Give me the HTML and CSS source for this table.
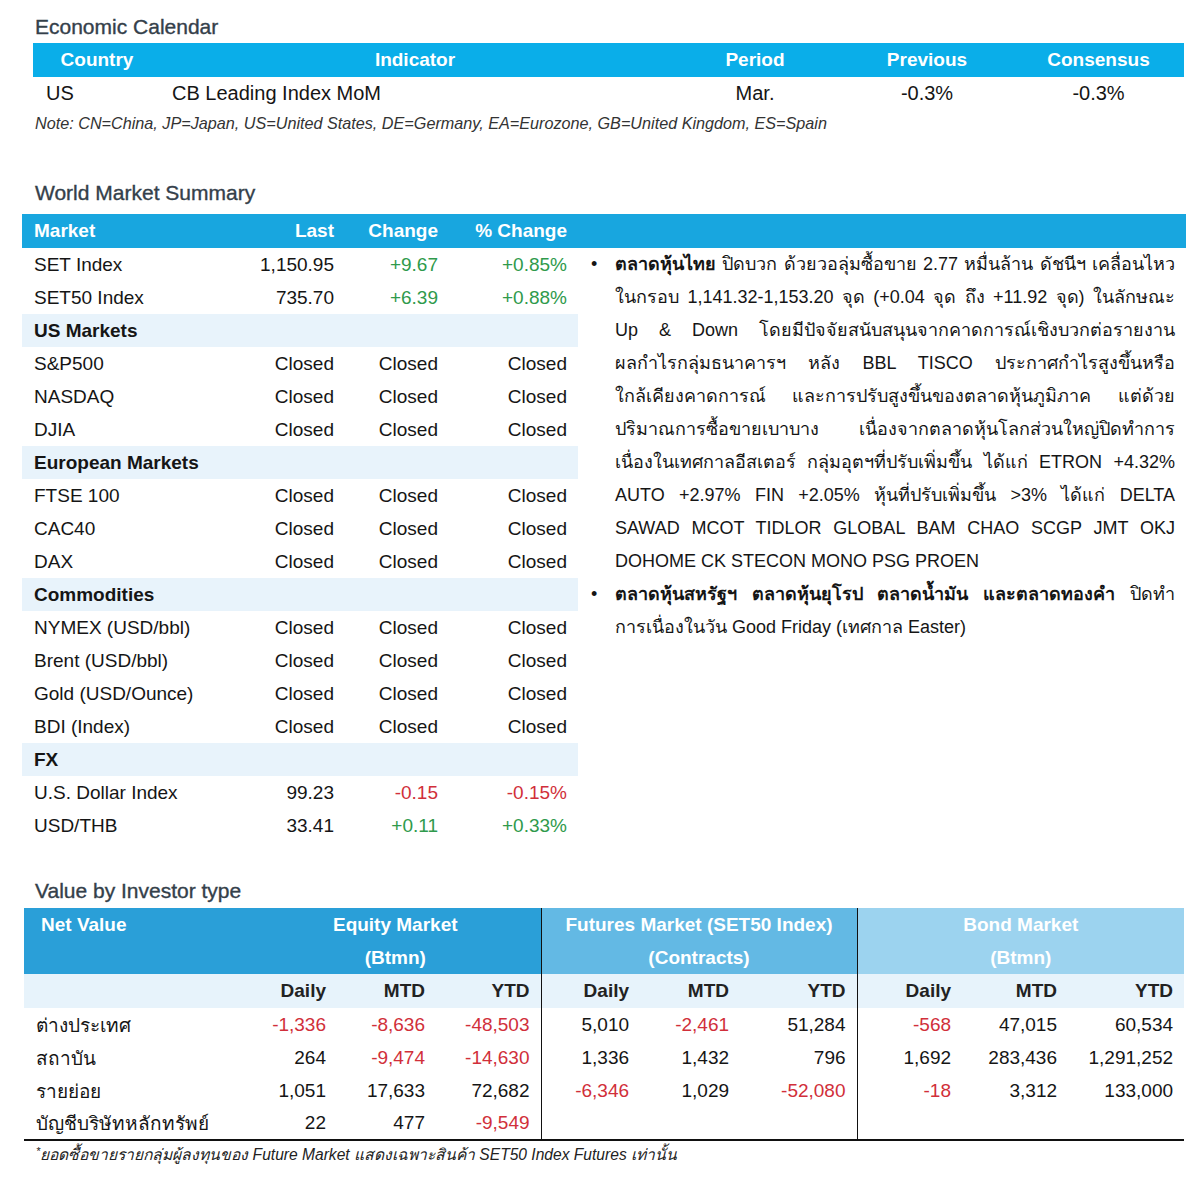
FILE: index.html
```html
<!DOCTYPE html>
<html lang="th">
<head>
<meta charset="utf-8">
<title>Market Summary</title>
<link rel="stylesheet" href="styles.css">
</head>
<body>
<div class="page">

  <section class="econ">
    <h2 class="sec-title">Economic Calendar</h2>
    <table class="econ-table">
      <colgroup>
        <col class="c-country"><col class="c-ind"><col class="c-period"><col class="c-prev"><col class="c-cons">
      </colgroup>
      <thead>
        <tr><th>Country</th><th>Indicator</th><th>Period</th><th>Previous</th><th>Consensus</th></tr>
      </thead>
      <tbody>
        <tr><td class="country">US</td><td class="ind">CB Leading Index MoM</td><td>Mar.</td><td>-0.3%</td><td>-0.3%</td></tr>
      </tbody>
    </table>
    <p class="note">Note: CN=China, JP=Japan, US=United States, DE=Germany, EA=Eurozone, GB=United Kingdom, ES=Spain</p>
  </section>

  <section class="wms">
    <h2 class="sec-title">World Market Summary</h2>
    <div class="wms-head">
      <div class="h-market">Market</div>
      <div class="h-num">Last</div>
      <div class="h-num">Change</div>
      <div class="h-pct">% Change</div>
    </div>
    <div class="wms-body">
      <table class="wms-table">
        <colgroup><col class="w1"><col class="w2"><col class="w3"><col class="w4"></colgroup>
        <tbody>
          <tr><td>SET Index</td><td>1,150.95</td><td class="up">+9.67</td><td class="up">+0.85%</td></tr>
          <tr><td>SET50 Index</td><td>735.70</td><td class="up">+6.39</td><td class="up">+0.88%</td></tr>
          <tr class="group"><td colspan="4">US Markets</td></tr>
          <tr><td>S&amp;P500</td><td>Closed</td><td>Closed</td><td>Closed</td></tr>
          <tr><td>NASDAQ</td><td>Closed</td><td>Closed</td><td>Closed</td></tr>
          <tr><td>DJIA</td><td>Closed</td><td>Closed</td><td>Closed</td></tr>
          <tr class="group"><td colspan="4">European Markets</td></tr>
          <tr><td>FTSE 100</td><td>Closed</td><td>Closed</td><td>Closed</td></tr>
          <tr><td>CAC40</td><td>Closed</td><td>Closed</td><td>Closed</td></tr>
          <tr><td>DAX</td><td>Closed</td><td>Closed</td><td>Closed</td></tr>
          <tr class="group"><td colspan="4">Commodities</td></tr>
          <tr><td>NYMEX (USD/bbl)</td><td>Closed</td><td>Closed</td><td>Closed</td></tr>
          <tr><td>Brent (USD/bbl)</td><td>Closed</td><td>Closed</td><td>Closed</td></tr>
          <tr><td>Gold (USD/Ounce)</td><td>Closed</td><td>Closed</td><td>Closed</td></tr>
          <tr><td>BDI (Index)</td><td>Closed</td><td>Closed</td><td>Closed</td></tr>
          <tr class="group"><td colspan="4">FX</td></tr>
          <tr><td>U.S. Dollar Index</td><td>99.23</td><td class="down">-0.15</td><td class="down">-0.15%</td></tr>
          <tr><td>USD/THB</td><td>33.41</td><td class="up">+0.11</td><td class="up">+0.33%</td></tr>
        </tbody>
      </table>
      <ul class="comm">
        <li>
          <span class="dot">•</span>
          <div class="para">
            <span class="ln"><b>ตลาดหุ้นไทย</b> ปิดบวก ด้วยวอลุ่มซื้อขาย 2.77 หมื่นล้าน ดัชนีฯ เคลื่อนไหว</span>
            <span class="ln">ในกรอบ 1,141.32-1,153.20 จุด (+0.04 จุด ถึง +11.92 จุด) ในลักษณะ</span>
            <span class="ln">Up &amp; Down โดยมีปัจจัยสนับสนุนจากคาดการณ์เชิงบวกต่อรายงาน</span>
            <span class="ln">ผลกำไรกลุ่มธนาคารฯ หลัง BBL TISCO ประกาศกำไรสูงขึ้นหรือ</span>
            <span class="ln">ใกล้เคียงคาดการณ์ และการปรับสูงขึ้นของตลาดหุ้นภูมิภาค แต่ด้วย</span>
            <span class="ln">ปริมาณการซื้อขายเบาบาง เนื่องจากตลาดหุ้นโลกส่วนใหญ่ปิดทำการ</span>
            <span class="ln">เนื่องในเทศกาลอีสเตอร์ กลุ่มอุตฯที่ปรับเพิ่มขึ้น ได้แก่ ETRON +4.32%</span>
            <span class="ln">AUTO +2.97% FIN +2.05% หุ้นที่ปรับเพิ่มขึ้น &gt;3% ได้แก่ DELTA</span>
            <span class="ln">SAWAD MCOT TIDLOR GLOBAL BAM CHAO SCGP JMT OKJ</span>
            <span class="ln last">DOHOME CK STECON MONO PSG PROEN</span>
          </div>
        </li>
        <li>
          <span class="dot">•</span>
          <div class="para">
            <span class="ln"><b>ตลาดหุ้นสหรัฐฯ ตลาดหุ้นยุโรป ตลาดน้ำมัน และตลาดทองคำ</b> ปิดทำ</span>
            <span class="ln last">การเนื่องในวัน Good Friday (เทศกาล Easter)</span>
          </div>
        </li>
      </ul>
    </div>
  </section>

  <section class="inv">
    <h2 class="sec-title">Value by Investor type</h2>
    <table class="inv-table">
      <colgroup>
        <col class="v0">
        <col class="v1"><col class="v2"><col class="v3">
        <col class="v4"><col class="v5"><col class="v6">
        <col class="v7"><col class="v8"><col class="v9">
      </colgroup>
      <thead>
        <tr class="top">
          <th class="net eq-bg">Net Value</th>
          <th colspan="3" class="eq eq-bg">Equity Market<br>(Btmn)</th>
          <th colspan="3" class="fu fu-bg sep">Futures Market (SET50 Index)<br>(Contracts)</th>
          <th colspan="3" class="bo bo-bg sep">Bond Market<br>(Btmn)</th>
        </tr>
        <tr class="sub">
          <th></th><th>Daily</th><th>MTD</th><th>YTD</th>
          <th class="sep">Daily</th><th>MTD</th><th>YTD</th>
          <th class="sep">Daily</th><th>MTD</th><th>YTD</th>
        </tr>
      </thead>
      <tbody>
        <tr>
          <td class="lbl">ต่างประเทศ</td>
          <td class="down">-1,336</td><td class="down">-8,636</td><td class="down">-48,503</td>
          <td class="sep">5,010</td><td class="down">-2,461</td><td>51,284</td>
          <td class="sep down">-568</td><td>47,015</td><td>60,534</td>
        </tr>
        <tr>
          <td class="lbl">สถาบัน</td>
          <td>264</td><td class="down">-9,474</td><td class="down">-14,630</td>
          <td class="sep">1,336</td><td>1,432</td><td>796</td>
          <td class="sep">1,692</td><td>283,436</td><td>1,291,252</td>
        </tr>
        <tr>
          <td class="lbl">รายย่อย</td>
          <td>1,051</td><td>17,633</td><td>72,682</td>
          <td class="sep down">-6,346</td><td>1,029</td><td class="down">-52,080</td>
          <td class="sep down">-18</td><td>3,312</td><td>133,000</td>
        </tr>
        <tr>
          <td class="lbl">บัญชีบริษัทหลักทรัพย์</td>
          <td>22</td><td>477</td><td class="down">-9,549</td>
          <td class="sep"></td><td></td><td></td>
          <td class="sep"></td><td></td><td></td>
        </tr>
      </tbody>
    </table>
    <p class="foot"><sup>*</sup>ยอดซื้อขายรายกลุ่มผู้ลงทุนของ Future Market แสดงเฉพาะสินค้า SET50 Index Futures เท่านั้น</p>
  </section>

</div>
</body>
</html>
```

FILE: styles.css
```css
* { box-sizing: border-box; }

body {
  margin: 0;
  background: #ffffff;
  color: #151515;
  font-family: "Liberation Sans", Arial, "Noto Sans", sans-serif;
  font-size: 19px;
}

.page {
  width: 1200px;
  padding-top: 15px;
}

.sec-title {
  margin: 0;
  padding-left: 35px;
  font-size: 21px;
  line-height: 24px;
  font-weight: normal;
  color: #34404a;
  -webkit-text-stroke: 0.35px #34404a;
}

table {
  border-collapse: collapse;
  table-layout: fixed;
}

td, th { padding: 0; }

/* Economic calendar */
.econ-table {
  margin: 4px 0 0 33px;
  width: 1151px;
}
.c-country { width: 128px; }
.c-ind { width: 508px; }
.c-period { width: 172px; }
.c-prev { width: 172px; }
.c-cons { width: 171px; }

.econ-table th {
  background: #0aaee9;
  color: #ffffff;
  font-weight: bold;
  height: 34px;
  text-align: center;
  font-size: 19px;
}
.econ-table td {
  height: 33px;
  text-align: center;
  font-size: 20px;
}
.econ-table td.country { text-align: left; padding-left: 13px; }
.econ-table td.ind { text-align: left; padding-left: 11px; }

.note {
  margin: 3px 0 0 35px;
  font-size: 16.2px;
  line-height: 20px;
  font-style: italic;
  color: #333;
}

/* World market summary */
.wms { margin-top: 48px; }

.wms-head {
  margin: 9px 0 0 22px;
  width: 1164px;
  height: 34px;
  background: #18a6df;
  color: #fff;
  font-weight: bold;
  display: grid;
  grid-template-columns: 218px 106px 104px 128px 1fr;
  align-items: center;
}
.wms-head > div { line-height: 34px; }
.h-market { padding-left: 12px; }
.h-num { text-align: right; padding-right: 12px; }
.h-pct { text-align: right; padding-right: 11px; }

.wms-body {
  display: flex;
  align-items: flex-start;
}

.wms-table {
  margin-left: 22px;
  width: 556px;
  flex: none;
}
.w1 { width: 218px; }
.w2 { width: 106px; }
.w3 { width: 104px; }
.w4 { width: 128px; }

.wms-table td {
  height: 33px;
  text-align: right;
  padding-right: 12px;
}
.wms-table td:first-child { text-align: left; padding-left: 12px; padding-right: 0; }
.wms-table td:last-child { padding-right: 11px; }
.wms-table tr.group td {
  background: #e8f3fb;
  font-weight: bold;
  text-align: left;
  padding-left: 12px;
}

.up { color: #2f9a4c; }
.down { color: #d12f3a; }

.comm {
  list-style: none;
  margin: 0 0 0 12px;
  padding: 0;
  width: 585px;
  font-size: 18px;
  line-height: 33px;
}
.comm li { display: flex; }
.comm .dot { width: 25px; flex: none; padding-left: 1px; }
.comm .para { flex: 1; min-width: 0; }
.comm .ln {
  display: block;
  text-align: justify;
  text-align-last: justify;
}
.comm .ln.last { text-align-last: left; }

/* Value by investor */
.inv { margin-top: 37px; }

.inv-table {
  margin: 5px 0 0 24px;
  width: 1160px;
  border-bottom: 2px solid #111;
}
.v0 { width: 206px; }
.v1 { width: 107px; }
.v2 { width: 99px; }
.v3 { width: 105px; }
.v4 { width: 99px; }
.v5 { width: 100px; }
.v6 { width: 117px; }
.v7 { width: 105px; }
.v8 { width: 106px; }
.v9 { width: 116px; }

.inv-table tr.top th {
  height: 66px;
  line-height: 33px;
  vertical-align: top;
  color: #fff;
  font-weight: bold;
  text-align: center;
}
.inv-table tr.top th.net { text-align: left; padding-left: 17px; }
.eq-bg { background: #2a9fd8; }
.fu-bg { background: #63b9e4; }
.bo-bg { background: #9cd3ef; }
.inv-table tr.top th.eq { padding-left: 20px; }

.inv-table tr.sub th {
  height: 34px;
  background: #e7f3fb;
  color: #222;
  font-weight: bold;
  text-align: right;
  padding-right: 11px;
}
.inv-table td {
  height: 33px;
  text-align: right;
  padding-right: 11px;
}
.inv-table td.lbl { text-align: left; padding-left: 12px; padding-right: 0; }
.inv-table .sep { border-left: 1px solid #111; }

.foot {
  margin: 0 0 0 36px;
  font-size: 15.6px;
  line-height: 20px;
  font-style: italic;
  color: #222;
}
.foot sup { font-size: 11px; vertical-align: 5px; }
```
